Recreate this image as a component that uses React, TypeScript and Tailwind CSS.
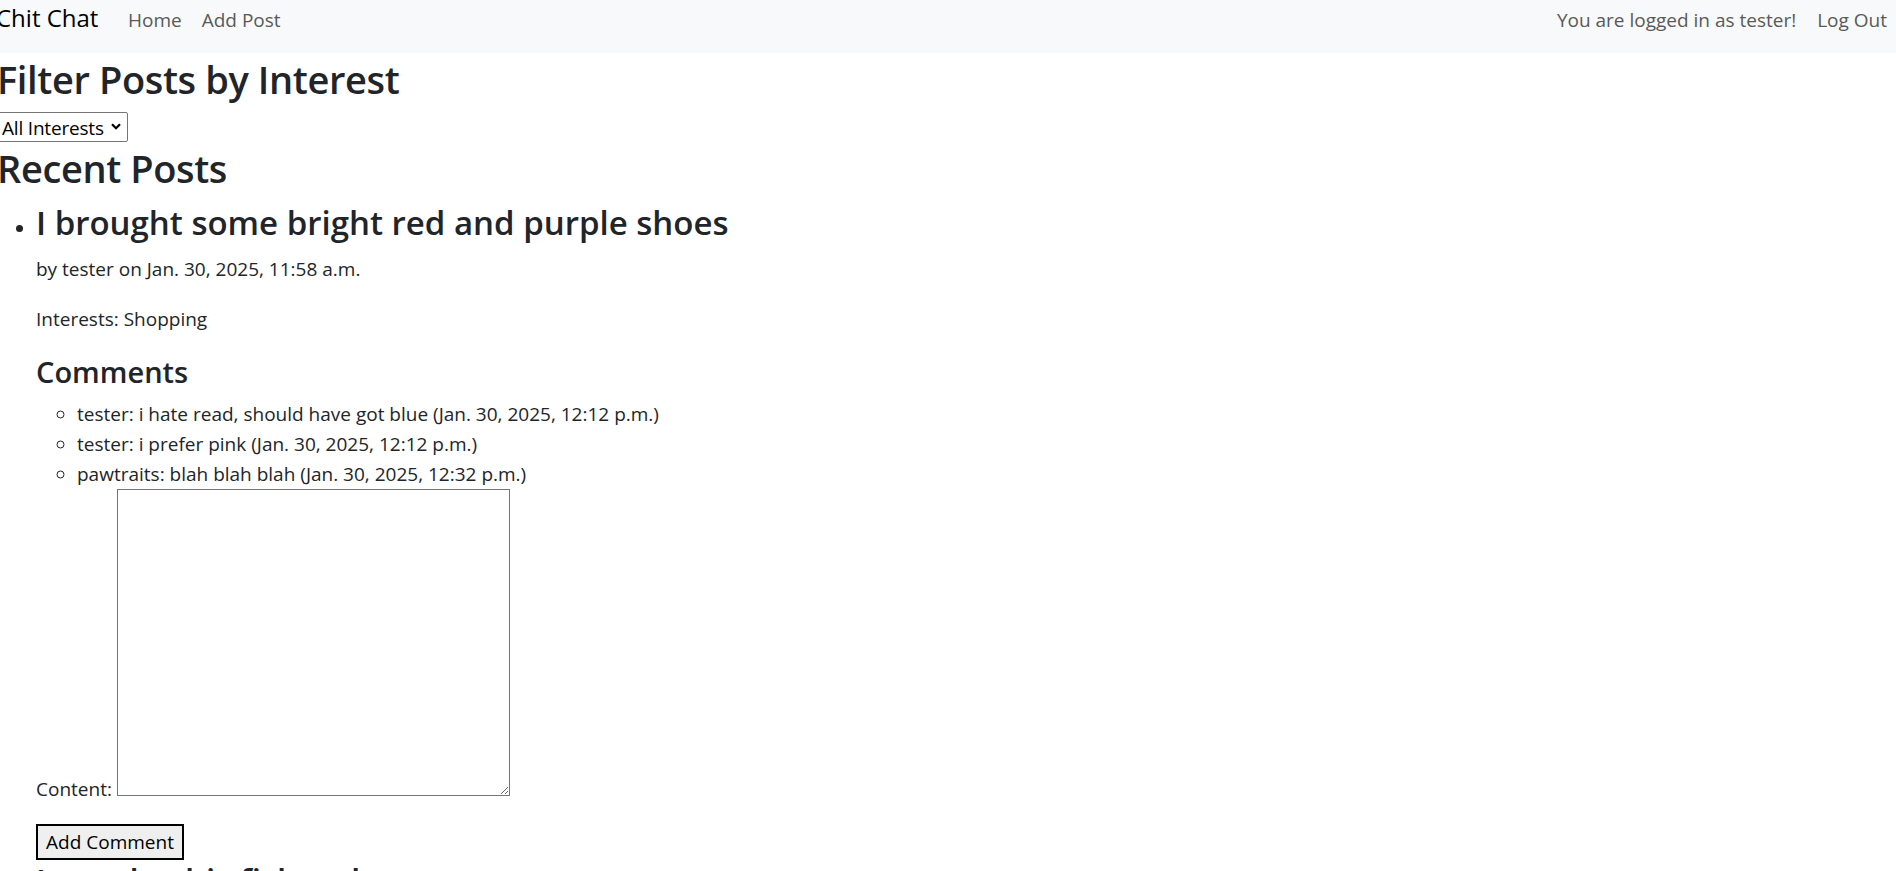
import React from 'react';

interface Comment {
  author: string;
  text: string;
  date: string;
}

const comments: Comment[] = [
  { author: 'tester', text: 'i hate read, should have got blue', date: 'Jan. 30, 2025, 12:12 p.m.' },
  { author: 'tester', text: 'i prefer pink', date: 'Jan. 30, 2025, 12:12 p.m.' },
  { author: 'pawtraits', text: 'blah blah blah', date: 'Jan. 30, 2025, 12:32 p.m.' },
];

const NavBar: React.FC = () => (
  <nav className="h-[53px] bg-[#f8f9fa] flex items-baseline justify-between">
    <div className="flex items-baseline">
      <a href="#" className="-ml-[4px] w-[122px] text-[24px] leading-[1.5] text-black">
        Chit Chat
      </a>
      <a href="#" className="px-[10px] text-[#595959]">Home</a>
      <a href="#" className="px-[10px] text-[#595959]">Add Post</a>
    </div>
    <div className="flex items-baseline">
      <span className="text-[#595959]">You are logged in as tester!</span>
      <a href="#" className="ml-[12px] px-[9px] text-[#595959]">Log Out</a>
    </div>
  </nav>
);

const CommentForm: React.FC = () => (
  <form onSubmit={(e) => e.preventDefault()}>
    <p className="mb-[20px]">
      <label htmlFor="content" className="inline-block w-[81px] whitespace-nowrap">Content:</label>
      <textarea
        id="content"
        className="w-[393px] h-[307px] border border-[#767676] bg-white"
      />
    </p>
    <button
      type="submit"
      className="h-[36px] w-[148px] whitespace-nowrap border-2 border-black bg-[#efefef] text-[19px] leading-none text-black"
    >
      Add Comment
    </button>
  </form>
);

export default function App() {
  return (
    <div className="min-h-screen overflow-hidden bg-white text-[19px] leading-[30px] text-[#212529] font-['Segoe_UI','Open_Sans',sans-serif]">
      <NavBar />
      <main className="-ml-[3px]">
        <h1 className="text-[38px] font-semibold leading-[52px] tracking-[-0.01em] mb-[7px]">
          Filter Posts by Interest
        </h1>
        <div className="relative w-[131px] h-[30px] border border-[#767676] rounded-[2px] bg-white">
          <select className="appearance-none bg-transparent w-full h-full pl-[4px] pr-[14px] text-[19px] leading-none tracking-[-0.01em] text-black outline-none">
            <option>All Interests</option>
            <option>Shopping</option>
            <option>Fishing</option>
          </select>
          <svg
            className="absolute right-[6px] top-[10px] pointer-events-none"
            width="10"
            height="7"
            viewBox="0 0 10 7"
            fill="none"
            stroke="black"
            strokeWidth="2.3"
          >
            <path d="M1 1.3 L5 5.2 L9 1.3" />
          </svg>
        </div>
        <h1 className="text-[38px] font-semibold leading-[52px] tracking-[-0.01em] mb-[8px]">Recent Posts</h1>
        <ul className="list-disc pl-[39px]">
          <li>
            <h2 className="text-[33px] font-semibold leading-[42px] mb-[10px]">
              I brought some bright red and purple shoes
            </h2>
            <p className="mb-[20px]">by tester on Jan. 30, 2025, 11:58 a.m.</p>
            <p className="mb-[20px]">Interests: Shopping</p>
            <h3 className="text-[29px] font-semibold leading-[36px] mb-[9px]">Comments</h3>
            <ul className="list-[circle] pl-[41px]">
              {comments.map((c, i) => (
                <li key={i}>
                  {c.author}: {c.text} ({c.date})
                </li>
              ))}
            </ul>
            <CommentForm />
          </li>
          <li>
            <h2 className="text-[33px] font-semibold leading-[42px] mb-[10px]">I caught this fish today</h2>
          </li>
        </ul>
      </main>
    </div>
  );
}
